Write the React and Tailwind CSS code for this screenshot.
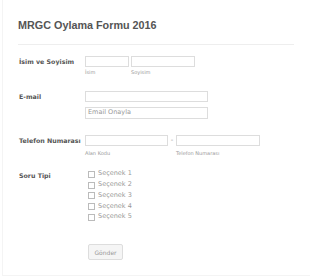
import React from "react";

const labelCls =
  "w-[66px] shrink-0 whitespace-nowrap font-bold text-[6.3px] leading-[11px] text-[#555]";
const inputCls = "h-[11px] border border-[#ddd] bg-white";
const subCls = "mt-[1px] text-[5px] leading-[8px] text-[#999]";

export default function App() {
  return (
    <div
      className="min-h-screen bg-white"
      style={{ fontFamily: "'DejaVu Sans', Verdana, sans-serif" }}
    >
      <div className="ml-[2px] h-[276px] border-b border-l border-[#f4f4f4] pl-[15px] pr-[14px]">
        <div className="pt-[19px]">
          <h1
            className="text-[10.8px] font-bold leading-[13px] text-[#555]"
            style={{ fontFamily: "'Liberation Sans', Arial, sans-serif" }}
          >
            MRGC Oylama Formu 2016
          </h1>
        </div>
        <div className="mt-[12px] h-px w-[276px] bg-[#eee]" />

        {/* name */}
        <div className="mt-[11px] flex pl-[1px]">
          <div className={labelCls}>İsim ve Soyisim</div>
          <div className="flex gap-[2px]">
            <div>
              <div className={`${inputCls} w-[44px]`} />
              <div className={subCls}>İsim</div>
            </div>
            <div>
              <div className={`${inputCls} w-[64px]`} />
              <div className={subCls}>Soyisim</div>
            </div>
          </div>
        </div>

        {/* email */}
        <div className="mt-[15px] flex pl-[1px]">
          <div className={labelCls}>E-mail</div>
          <div className="flex flex-col gap-[5px]">
            <div className={`${inputCls} w-[123px]`} />
            <div
              className={`${inputCls} flex h-[12px] w-[123px] items-center px-[2px] text-[6.5px] text-[#999]`}
            >
              Email Onayla
            </div>
          </div>
        </div>

        {/* phone */}
        <div className="mt-[16px] flex pl-[1px]">
          <div className={labelCls}>Telefon Numarası</div>
          <div className="flex">
            <div>
              <div className={`${inputCls} h-[10px] w-[83px]`} />
              <div className={`${subCls} mt-[3px]`}>Alan Kodu</div>
            </div>
            <div className="w-[8px] text-center text-[7px] leading-[11px] text-[#999]">
              -
            </div>
            <div>
              <div className={`${inputCls} h-[10px] w-[84px]`} />
              <div className={`${subCls} mt-[3px]`}>Telefon Numarası</div>
            </div>
          </div>
        </div>

        {/* soru tipi */}
        <div className="mt-[12px] flex pl-[1px]">
          <div className={`${labelCls} pt-[1px]`}>Soru Tipi</div>
          <div className="flex flex-col pl-[3px]">
            {[1, 2, 3, 4, 5].map((n) => (
              <div key={n} className="flex h-[10.7px] items-center gap-[3px]">
                <div className="h-[7px] w-[7px] border border-[#bbb] bg-white" />
                <span className="text-[6.5px] text-[#999]">Seçenek {n}</span>
              </div>
            ))}
          </div>
        </div>

        {/* submit */}
        <div className="mt-[22px] pl-[70px]">
          <button
            type="button"
            className="flex h-[16px] w-[35px] items-center justify-center rounded-[2px] border border-[#ddd] bg-[#f5f5f5] text-[6px] text-[#999]"
          >
            Gönder
          </button>
        </div>
      </div>
    </div>
  );
}
